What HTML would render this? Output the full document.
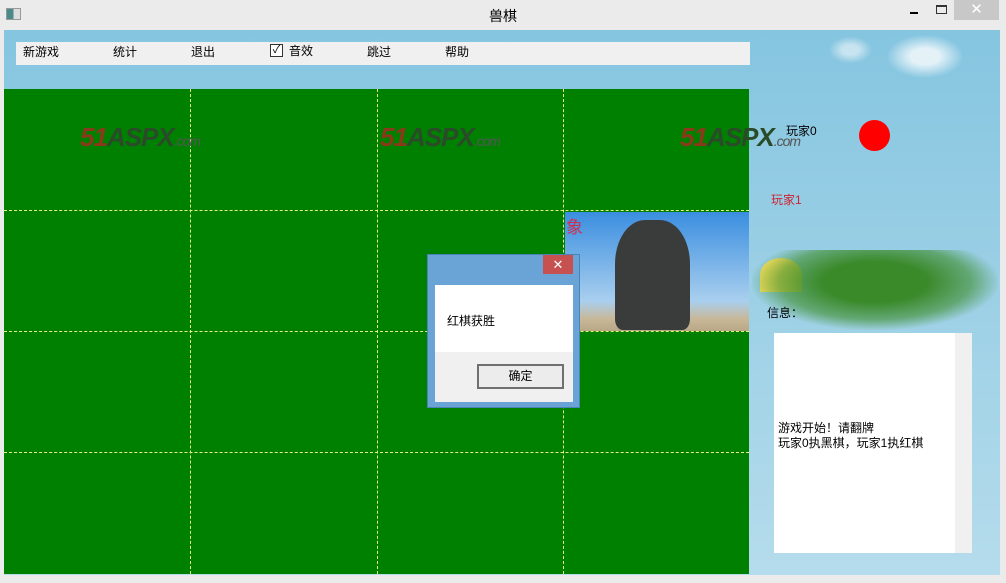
<!DOCTYPE html><html><head><meta charset="utf-8"><style>
*{margin:0;padding:0;box-sizing:border-box}
body{width:1006px;height:583px;overflow:hidden;background:#ebebeb;font-family:"Liberation Sans","Noto Sans CJK SC",sans-serif;font-size:12px;position:relative}
.a{position:absolute}
.vl{position:absolute;top:89px;height:485px;width:0;border-left:1px dashed #e8f080}
.hl{position:absolute;left:4px;width:745px;height:0;border-top:1px dashed #e8f080}
.logo{position:absolute;font:italic bold 26px "Liberation Sans",sans-serif;color:#8a3a1a;letter-spacing:-1px}
.logo b{color:#2a4a2a}.logo i{font-size:14px;font-style:italic;font-weight:normal;color:#555}
</style></head><body>
<div class="a" style="left:6px;top:8px;width:15px;height:12px;border:1px solid #999;background:linear-gradient(90deg,#4a8a8a 50%,#ddd 50%)"></div>
<div class="a" style="left:0;top:6px;width:1006px;text-align:center;font-size:14px">兽棋</div>
<div class="a" style="left:910px;top:12px;width:8px;height:2px;background:#000"></div>
<div class="a" style="left:936px;top:5px;width:11px;height:9px;border:1px solid #333;border-top-width:2px"></div>
<div class="a" style="left:954px;top:0;width:45px;height:20px;background:#c8c8c8;color:#fff;text-align:center;font-size:15px;line-height:20px">✕</div>
<div class="a" style="left:4px;top:30px;width:996px;height:545px;background:linear-gradient(#85c5e0,#b5dcec)"></div>
<div class="a" style="left:885px;top:34px;width:80px;height:45px;background:radial-gradient(ellipse,#e4f2f8 25%,rgba(255,255,255,0) 68%)"></div>
<div class="a" style="left:828px;top:36px;width:45px;height:28px;background:radial-gradient(ellipse,#c8e4f0 25%,rgba(255,255,255,0) 68%)"></div>
<div class="a" style="left:16px;top:42px;width:734px;height:23px;background:#f0f0f0"></div>
<div class="a" style="top:43px;left:23px;font-size:12px">新游戏</div>
<div class="a" style="top:43px;left:113px">统计</div>
<div class="a" style="top:43px;left:191px">退出</div>
<div class="a" style="top:44px;left:270px;width:13px;height:13px;border:1px solid #333;background:#fff;font-size:11px;line-height:11px;text-align:center">✓</div>
<div class="a" style="top:42px;left:289px">音效</div>
<div class="a" style="top:43px;left:367px">跳过</div>
<div class="a" style="top:43px;left:445px">帮助</div>
<div class="a" style="left:4px;top:89px;width:745px;height:485px;background:#008000"></div>
<div class="vl" style="left:190px"></div><div class="vl" style="left:377px"></div><div class="vl" style="left:563px"></div>
<div class="hl" style="top:210px"></div><div class="hl" style="top:331px"></div><div class="hl" style="top:452px"></div>
<div class="logo" style="left:80px;top:122px">51<b>ASPX</b><i>.com</i></div>
<div class="logo" style="left:380px;top:122px">51<b>ASPX</b><i>.com</i></div>
<div class="logo" style="left:680px;top:122px">51<b>ASPX</b><i>.com</i></div>
<div class="a" style="left:565px;top:212px;width:184px;height:119px;background:linear-gradient(#3a8ee0,#a9cfee 75%,#c8b898 90%,#b8a888)"></div>
<div class="a" style="left:615px;top:220px;width:75px;height:110px;background:#3a3c3c;border-radius:40% 40% 10% 10%"></div>
<div class="a" style="left:566px;top:213px;color:#d03050;font-size:17px">象</div>
<div class="a" style="left:786px;top:122px">玩家0</div>
<div class="a" style="left:859px;top:120px;width:31px;height:31px;border-radius:50%;background:#f00"></div>
<div class="a" style="left:771px;top:191px;color:#d02030">玩家1</div>
<div class="a" style="left:760px;top:258px;width:42px;height:34px;border-radius:50% 50% 0 0;background:#f8e060"></div>
<div class="a" style="left:752px;top:250px;width:246px;height:80px;background:radial-gradient(ellipse at 50% 40%,#3a8a2a 30%,rgba(60,140,40,.6) 55%,rgba(0,0,0,0) 72%)"></div>
<div class="a" style="left:767px;top:304px">信息：</div>
<div class="a" style="left:774px;top:333px;width:181px;height:220px;background:#fff"></div>
<div class="a" style="left:955px;top:333px;width:17px;height:220px;background:#f0f0f0"></div>
<div class="a" style="left:778px;top:421px;line-height:15px">游戏开始！请翻牌<br>玩家0执黑棋，玩家1执红棋</div>
<div class="a" style="left:427px;top:254px;width:153px;height:154px;background:#6aa4d6;border:1px solid #4a84b6"></div>
<div class="a" style="left:543px;top:255px;width:30px;height:19px;background:#c75050;color:#fff;text-align:center;line-height:19px;font-size:13px">✕</div>
<div class="a" style="left:435px;top:285px;width:138px;height:67px;background:#fff"></div>
<div class="a" style="left:435px;top:352px;width:138px;height:50px;background:#f0f0f0"></div>
<div class="a" style="left:447px;top:312px">红棋获胜</div>
<div class="a" style="left:477px;top:364px;width:87px;height:25px;border:2px solid #707070;background:#ececec;text-align:center;line-height:21px">确定</div>
</body></html>
